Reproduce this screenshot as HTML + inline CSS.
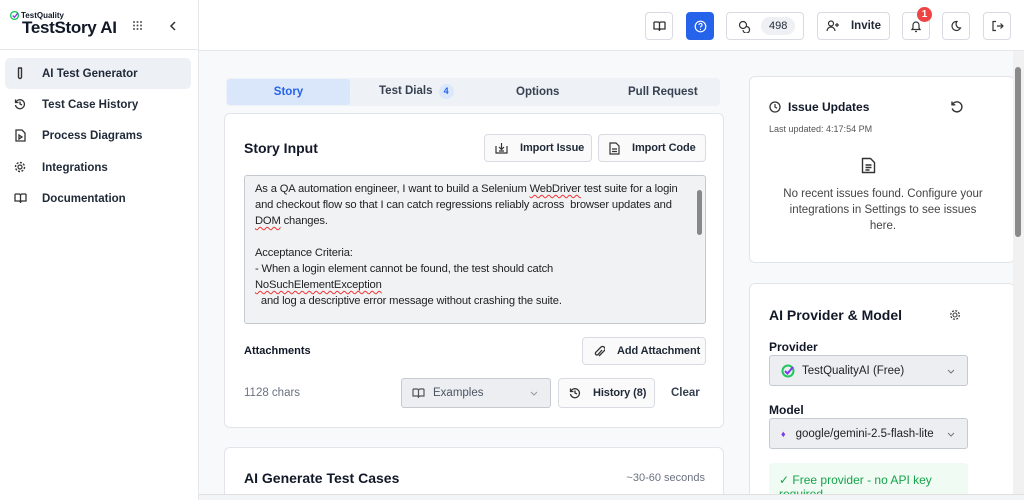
<!DOCTYPE html>
<html><head><meta charset="utf-8"><style>
*{box-sizing:border-box;margin:0;padding:0}
html,body{width:1024px;height:500px;overflow:hidden}
body{background:#f8f9fb;font-family:"Liberation Sans",sans-serif;color:#111827;position:relative}
.abs{position:absolute}
.side{left:0;top:0;width:199px;height:500px;background:#fff;border-right:1px solid #e5e7eb}
.hdr{left:199px;top:0;width:825px;height:51px;background:#fff;border-bottom:1px solid #e5e7eb}
.nav{position:absolute;left:5px;width:186px;height:31px;border-radius:5px;font-size:11.5px;font-weight:bold;color:#1f2937;display:flex;align-items:center;padding-left:37px}
.nav svg{position:absolute;left:9px;top:9px}
.hb{position:absolute;top:12px;height:28px;border:1px solid #d8dce2;border-radius:4px;background:#fff;display:flex;align-items:center;justify-content:center;font-size:11.5px;font-weight:bold;color:#1f2937;white-space:nowrap}
.card{position:absolute;background:#fff;border:1px solid #e1e5ea;border-radius:6px}
.btn{position:absolute;height:28px;border:1px solid #d8dce2;border-radius:4px;background:#fafafa;display:flex;align-items:center;font-size:11px;font-weight:bold;color:#1f2937;white-space:nowrap;letter-spacing:-0.1px}
.btn svg{margin:0 12px 0 10px;flex:none}
.sq{text-decoration:underline wavy #e33;text-decoration-thickness:1px;text-underline-offset:2px}
</style></head><body>
<div class="abs side">
 <div class="abs" style="left:10px;top:11px;font-size:8px;font-weight:bold;display:flex;align-items:center;gap:2px"><svg width="9" height="9" viewBox="0 0 10 10"><circle cx="5" cy="5" r="4.3" fill="none" stroke="#22c55e" stroke-width="1.5"/><path d="M3 5l2 2 4-5" stroke="#7c3aed" stroke-width="1.5" fill="none"/></svg>TestQuality</div>
 <div class="abs" style="left:22px;top:18px;font-size:17px;font-weight:bold;letter-spacing:-0.3px">TestStory AI</div>
 <svg class="abs" style="left:132px;top:20px" width="11" height="11"><g fill="#555"><circle cx="2" cy="2" r="1"/><circle cx="5.5" cy="2" r="1"/><circle cx="9" cy="2" r="1"/><circle cx="2" cy="5.5" r="1"/><circle cx="5.5" cy="5.5" r="1"/><circle cx="9" cy="5.5" r="1"/><circle cx="2" cy="9" r="1"/><circle cx="5.5" cy="9" r="1"/><circle cx="9" cy="9" r="1"/></g></svg>
 <svg class="abs" style="left:169px;top:21px" width="8" height="10"><path d="M6 1L2 5l4 4" stroke="#333" stroke-width="1.5" fill="none"/></svg>
 <div class="abs" style="left:0;top:49px;width:199px;border-top:1px solid #e5e7eb"></div>
 <div class="nav" style="top:58px;background:#edf0f5"><svg width="12" height="13" viewBox="0 0 12 13"><path d="M4 1h4M4.5 1v9a1.5 1.5 0 0 0 3 0V1" stroke="#333" stroke-width="1.4" fill="none"/></svg>AI Test Generator</div>
 <div class="nav" style="top:89px"><svg width="12" height="12" viewBox="0 0 12 12"><path d="M2 4a4.5 4.5 0 1 1-.5 3M1.5 1.5V4.5H4.5M6 3.5V6l2 1" stroke="#333" stroke-width="1.3" fill="none"/></svg>Test Case History</div>
 <div class="nav" style="top:120px"><svg width="12" height="13" viewBox="0 0 12 13"><path d="M2 1h6l3 3v8H2z M5 6l3 2-3 2z" stroke="#333" stroke-width="1.3" fill="none"/></svg>Process Diagrams</div>
 <div class="nav" style="top:152px"><svg width="12" height="12" viewBox="0 0 12 12"><circle cx="6" cy="6" r="2" stroke="#333" stroke-width="1.2" fill="none"/><circle cx="6" cy="6" r="4.5" stroke="#333" stroke-width="1.4" stroke-dasharray="2 1.5" fill="none"/></svg>Integrations</div>
 <div class="nav" style="top:183px"><svg width="13" height="12" viewBox="0 0 13 12"><path d="M1 2h4a1.5 1.5 0 0 1 1.5 1.5V11 M12 2H8a1.5 1.5 0 0 0-1.5 1.5 M1 2v7h4.5l1 1 1-1H12V2" stroke="#333" stroke-width="1.3" fill="none"/></svg>Documentation</div>
</div>
<div class="abs hdr">
 <div class="hb" style="left:446px;width:28px"><svg width="13" height="12" viewBox="0 0 13 12"><path d="M1 2h4a1.5 1.5 0 0 1 1.5 1.5V11 M12 2H8a1.5 1.5 0 0 0-1.5 1.5 M1 2v7h4.5l1 1 1-1H12V2" stroke="#333" stroke-width="1.3" fill="none"/></svg></div>
 <div class="hb" style="left:487px;width:28px;background:#2563eb;border-color:#2563eb"><svg width="13" height="13"><circle cx="6.5" cy="6.5" r="5.3" stroke="#fff" stroke-width="1.2" fill="none"/><path d="M5 5a1.5 1.5 0 1 1 2 1.4c-.5.3-.5.6-.5 1.1" stroke="#fff" stroke-width="1.1" fill="none"/><circle cx="6.5" cy="9.5" r=".6" fill="#fff"/></svg></div>
 <div class="hb" style="left:527px;width:78px;justify-content:flex-start;padding-left:11px"><svg width="13" height="13"><circle cx="5" cy="5" r="3.5" stroke="#333" stroke-width="1.2" fill="none"/><path d="M8 6.5a3.3 3.3 0 1 1-3 3.5" stroke="#333" stroke-width="1.2" fill="none"/></svg><span style="margin-left:10px;background:#eef0f3;border-radius:10px;padding:3px 8px;font-size:11px;font-weight:normal">498</span></div>
 <div class="hb" style="left:618px;width:73px"><svg width="14" height="12" style="margin-right:11px"><circle cx="5" cy="3.5" r="2.5" stroke="#333" stroke-width="1.2" fill="none"/><path d="M1 11a4 4 0 0 1 8 0M11 3v4M9 5h4" stroke="#333" stroke-width="1.2" fill="none"/></svg>Invite</div>
 <div class="hb" style="left:703px;width:28px"><svg width="12" height="13"><path d="M2 9.5h8L9 8V5a3 3 0 0 0-6 0v3z M5 11.5h2" stroke="#333" stroke-width="1.2" fill="none"/></svg></div>
 <div class="abs" style="left:718px;top:7px;width:15px;height:15px;border-radius:50%;background:#ef4444;color:#fff;font-size:10px;font-weight:bold;display:flex;align-items:center;justify-content:center">1</div>
 <div class="hb" style="left:743px;width:28px"><svg width="12" height="12"><path d="M7 1.5a4.5 4.5 0 1 0 3.5 6.5A4 4 0 0 1 7 1.5z" stroke="#333" stroke-width="1.2" fill="none"/></svg></div>
 <div class="hb" style="left:784px;width:28px"><svg width="13" height="12"><path d="M5 1.5H2v9h3M6 6h6M9.5 3.5L12 6l-2.5 2.5" stroke="#333" stroke-width="1.2" fill="none"/></svg></div>
</div>
<div class="abs" style="left:226px;top:78px;width:494px;height:28px;background:#eef1f5;border-radius:4px;font-size:11.5px;font-weight:bold;color:#374151">
 <div class="abs" style="left:1px;top:1px;width:123px;height:26px;background:#dae7fb;color:#2563eb;border-radius:3px;display:flex;align-items:center;justify-content:center">Story</div>
 <div class="abs" style="left:153px;top:6px;white-space:nowrap">Test Dials <span style="display:inline-block;width:15px;height:15px;border-radius:50%;background:#dbe7fb;color:#2563eb;font-size:9px;text-align:center;line-height:15px;margin-left:3px">4</span></div>
 <div class="abs" style="left:290px;top:8px">Options</div>
 <div class="abs" style="left:402px;top:8px">Pull Request</div>
</div>
<div class="card" style="left:224px;top:113px;width:500px;height:315px">
 <div class="abs" style="left:19px;top:26px;font-size:14px;font-weight:bold">Story Input</div>
 <div class="btn" style="left:259px;top:20px;width:108px"><svg width="13" height="12"><path d="M1 4v7h11V4M6.5 1v6M4 5l2.5 2.5L9 5M4 9h5" stroke="#333" stroke-width="1.2" fill="none"/></svg>Import Issue</div>
 <div class="btn" style="left:373px;top:20px;width:108px"><svg width="11" height="13"><path d="M1 1h6l3 3v8H1z M3 7h5M3 9.5h5" stroke="#333" stroke-width="1.2" fill="none"/></svg>Import Code</div>
 <div class="abs" style="left:19px;top:61px;width:462px;height:149px;background:#f1f2f4;border:1px solid #c5cad1;border-radius:3px;font-size:11.2px;line-height:16px;color:#222;padding:5px 10px;overflow:hidden;letter-spacing:-0.15px">
  As a QA automation engineer, I want to build a Selenium <span class="sq">WebDriver</span> test suite for a login<br>and checkout flow so that I can catch regressions reliably across&nbsp; browser updates and<br><span class="sq">DOM</span> changes.<br><br>Acceptance Criteria:<br>- When a login element cannot be found, the test should catch<br><span class="sq">NoSuchElementException</span><br>&nbsp; and log a descriptive error message without crashing the suite.
  <div class="abs" style="right:3px;top:14px;width:5px;height:45px;background:#888;border-radius:3px"></div>
 </div>
 <div class="abs" style="left:19px;top:231px;font-size:11px;font-weight:bold">Attachments</div>
 <div class="btn" style="left:357px;top:223px;width:124px"><svg width="12" height="13"><path d="M9 5L5 9.5a1.5 1.5 0 0 1-2.2-2.2L8 2a2.5 2.5 0 0 1 3.5 3.5L6 11" stroke="#333" stroke-width="1.3" fill="none"/></svg>Add Attachment</div>
 <div class="abs" style="left:19px;top:273px;font-size:11.5px;color:#6b7280">1128 chars</div>
 <div class="abs" style="left:176px;top:264px;width:150px;height:30px;background:#eceef1;border:1px solid #c5cad1;border-radius:3px;font-size:11.5px;color:#4b5563;display:flex;align-items:center;padding-left:10px"><svg width="13" height="12" style="margin-right:8px"><path d="M1 2h4a1.5 1.5 0 0 1 1.5 1.5V11 M12 2H8a1.5 1.5 0 0 0-1.5 1.5 M1 2v7h4.5l1 1 1-1H12V2" stroke="#555" stroke-width="1.2" fill="none"/></svg>Examples<svg class="abs" style="right:12px;top:12px" width="8" height="5"><path d="M1 1l3 3 3-3" stroke="#999" fill="none"/></svg></div>
 <div class="btn" style="left:333px;top:264px;width:97px;height:30px"><svg width="12" height="12"><path d="M2 4a4.5 4.5 0 1 1-.5 3M1.5 1.5V4.5H4.5M6 3.5V6l2 1" stroke="#333" stroke-width="1.3" fill="none"/></svg>History (8)</div>
 <div class="abs" style="left:446px;top:273px;font-size:11.5px;font-weight:bold;color:#374151">Clear</div>
</div>
<div class="card" style="left:224px;top:447px;width:500px;height:70px">
 <div class="abs" style="left:19px;top:22px;font-size:14px;font-weight:bold">AI Generate Test Cases</div>
 <div class="abs" style="right:18px;top:24px;font-size:11px;color:#6b7280">~30-60 seconds</div>
</div>
<div class="card" style="left:749px;top:76px;width:266px;height:187px">
 <svg class="abs" style="left:19px;top:24px" width="12" height="12"><circle cx="6" cy="6" r="5" stroke="#333" stroke-width="1.3" fill="none"/><path d="M6 3v3l2 1.3" stroke="#333" stroke-width="1.2" fill="none"/></svg>
 <div class="abs" style="left:38px;top:23px;font-size:12px;font-weight:bold">Issue Updates</div>
 <svg class="abs" style="left:200px;top:23px" width="13" height="13"><path d="M2.5 4.5a5 5 0 1 1-.3 4M2 1.5v3.3h3.3" stroke="#333" stroke-width="1.4" fill="none"/></svg>
 <div class="abs" style="left:19px;top:47px;font-size:9px;color:#555">Last updated: 4:17:54 PM</div>
 <svg class="abs" style="left:111px;top:80px" width="15" height="17"><path d="M1.5 1.5h8l4 4v10h-12z M4.5 8h6M4.5 10.5h6M4.5 13h4" stroke="#333" stroke-width="1.4" fill="none"/></svg>
 <div class="abs" style="left:20px;top:109px;width:226px;text-align:center;font-size:11.5px;line-height:16px;color:#444">No recent issues found. Configure your<br>integrations in Settings to see issues<br>here.</div>
</div>
<div class="card" style="left:749px;top:283px;width:266px;height:240px">
 <div class="abs" style="left:19px;top:23px;font-size:14px;font-weight:bold">AI Provider &amp; Model</div>
 <svg class="abs" style="left:199px;top:25px" width="12" height="12"><circle cx="6" cy="6" r="2" stroke="#444" stroke-width="1.1" fill="none"/><circle cx="6" cy="6" r="4.3" stroke="#444" stroke-width="1.3" stroke-dasharray="2 1.4" fill="none"/></svg>
 <div class="abs" style="left:19px;top:56px;font-size:12px;font-weight:bold">Provider</div>
 <div class="abs" style="left:19px;top:71px;width:199px;height:31px;background:#eceef1;border:1px solid #c5cad1;border-radius:3px;font-size:11.5px;display:flex;align-items:center;padding-left:11px;color:#222"><svg width="14" height="14" style="margin-right:7px"><circle cx="7" cy="7" r="5.5" stroke="#22c55e" stroke-width="2" fill="none"/><path d="M4 7l2.5 2.5L12 3" stroke="#7c3aed" stroke-width="2" fill="none"/></svg>TestQualityAI (Free)<svg class="abs" style="right:12px;top:13px" width="8" height="5"><path d="M1 1l3 3 3-3" stroke="#777" fill="none"/></svg></div>
 <div class="abs" style="left:19px;top:119px;font-size:12px;font-weight:bold">Model</div>
 <div class="abs" style="left:19px;top:134px;width:199px;height:31px;background:#eceef1;border:1px solid #c5cad1;border-radius:3px;font-size:11.5px;display:flex;align-items:center;padding-left:11px;color:#222"><span style="color:#7c3aed;font-size:9px;margin-right:10px">♦</span>google/gemini-2.5-flash-lite<svg class="abs" style="right:12px;top:13px" width="8" height="5"><path d="M1 1l3 3 3-3" stroke="#777" fill="none"/></svg></div>
 <div class="abs" style="left:19px;top:179px;width:199px;height:50px;background:#effbf3;border-radius:4px;font-size:12px;color:#16a34a;padding:10px 10px">✓ Free provider - no API key required</div>
</div>
<div class="abs" style="left:1013px;top:51px;width:11px;height:449px;background:#f1f1f1"></div>
<div class="abs" style="left:1015px;top:67px;width:6px;height:170px;background:#8a8a8a;border-radius:3px"></div>
<div class="abs" style="left:199px;top:494px;width:825px;height:6px;background:#f3f4f6;border-top:1px solid #e0e0e0"></div>
</body></html>
